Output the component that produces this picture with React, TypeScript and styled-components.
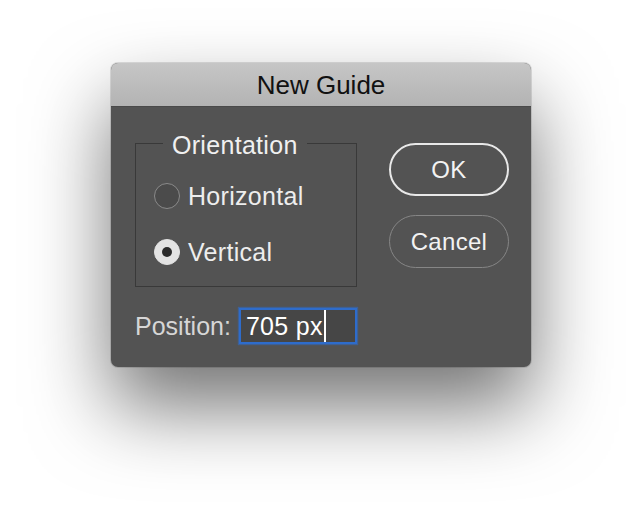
import React from "react";
import styled, { createGlobalStyle } from "styled-components";

const Global = createGlobalStyle`
  html, body { margin: 0; padding: 0; background: #ffffff; }
  body { font-family: "Liberation Sans", Arial, Helvetica, sans-serif; -webkit-font-smoothing: antialiased; }
`;

const Page = styled.div`
  width: 642px;
  height: 526px;
  padding: 63px 0 0 111px;
  box-sizing: border-box;
  overflow: hidden;
`;

const Dialog = styled.div`
  width: 420px;
  height: 304px;
  border-radius: 7px;
  overflow: hidden;
  background: #535353;
  box-shadow: 0 40px 80px rgba(0, 0, 0, 0.55), 0 0 0 1px rgba(0, 0, 0, 0.12);
  display: flex;
  flex-direction: column;
`;

const TitleBar = styled.div`
  height: 44px;
  flex: none;
  display: flex;
  align-items: center;
  justify-content: center;
  background: linear-gradient(#c6c6c6, #b3b3b3);
  border-bottom: 1px solid #4a4a4a;
  box-sizing: border-box;
  color: #111111;
  font-size: 26px;
  padding-top: 2px;
`;

const Body = styled.div`
  flex: 1;
  padding: 21px 22px 23px 24px;
  display: flex;
  flex-direction: column;
  gap: 21px;
  letter-spacing: 0.3px;
`;

const TopRow = styled.div`
  display: flex;
  gap: 32px;
  align-items: flex-start;
`;

const Group = styled.fieldset`
  width: 222px;
  box-sizing: border-box;
  margin: 0;
  padding: 23px 0 19px 18px;
  border: 1px solid #393939;
  display: flex;
  flex-direction: column;
  gap: 26px;
`;

const Legend = styled.legend`
  margin-left: 9px;
  padding: 4px 9px 0;
  line-height: 26px;
  font-size: 25px;
  color: #f0f0f0;
`;

const RadioRow = styled.label`
  display: flex;
  align-items: center;
  height: 30px;
  gap: 8px;
  font-size: 25px;
  color: #ededed;
`;

const RadioCircle = styled.span<{ $checked?: boolean }>`
  width: 26px;
  height: 26px;
  box-sizing: border-box;
  border-radius: 50%;
  flex: none;
  display: flex;
  align-items: center;
  justify-content: center;
  background: ${(p) => (p.$checked ? "#e3e3e3" : "#4b4b4b")};
  border: 1.5px solid ${(p) => (p.$checked ? "#e3e3e3" : "#8a8a8a")};
  &::after {
    content: "";
    display: ${(p) => (p.$checked ? "block" : "none")};
    width: 10px;
    height: 10px;
    border-radius: 50%;
    background: #2b2b2b;
  }
`;

const Buttons = styled.div`
  margin-top: 15px;
  display: flex;
  flex-direction: column;
  gap: 19px;
`;

const Button = styled.button<{ $primary?: boolean }>`
  width: 120px;
  height: 53px;
  box-sizing: border-box;
  border-radius: 27px;
  background: #535353;
  border: ${(p) => (p.$primary ? "2px solid #e8e8e8" : "1.5px solid #868686")};
  color: #f2f2f2;
  font-family: inherit;
  font-size: 24px;
  letter-spacing: 0.3px;
  padding: 0;
  display: flex;
  align-items: center;
  justify-content: center;
`;

const PositionRow = styled.div`
  display: flex;
  align-items: center;
  gap: 8px;
`;

const FieldLabel = styled.span`
  font-size: 25px;
  letter-spacing: 0;
  color: #d6d6d6;
`;

const Field = styled.div`
  width: 118px;
  height: 36px;
  box-sizing: border-box;
  border: 2px solid #2e6ccb;
  box-shadow: 0 0 1px 1px rgba(46, 108, 203, 0.55);
  background: #464646;
  color: #ffffff;
  font-size: 25px;
  padding: 0 0 0 5px;
  display: flex;
  align-items: center;
`;

const Caret = styled.span`
  display: inline-block;
  width: 2px;
  height: 32px;
  margin-left: 1px;
  background: #ffffff;
`;

export default function App() {
  return (
    <Page>
      <Global />
      <Dialog>
        <TitleBar>New Guide</TitleBar>
        <Body>
          <TopRow>
            <Group>
              <Legend>Orientation</Legend>
              <RadioRow>
                <RadioCircle />
                Horizontal
              </RadioRow>
              <RadioRow>
                <RadioCircle $checked />
                Vertical
              </RadioRow>
            </Group>
            <Buttons>
              <Button $primary>OK</Button>
              <Button>Cancel</Button>
            </Buttons>
          </TopRow>
          <PositionRow>
            <FieldLabel>Position:</FieldLabel>
            <Field>
              705 px
              <Caret />
            </Field>
          </PositionRow>
        </Body>
      </Dialog>
    </Page>
  );
}
